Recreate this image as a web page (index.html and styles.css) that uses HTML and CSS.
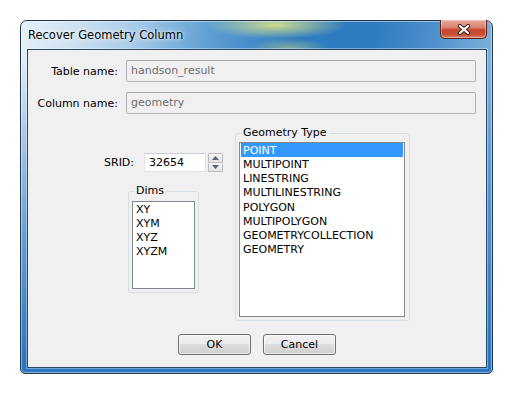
FILE: index.html
```html
<!DOCTYPE html>
<html>
<head>
<meta charset="utf-8">
<link rel="stylesheet" href="styles.css">
</head>
<body>
<div class="window">
  <div class="titlebar">
    <span class="title">Recover Geometry Column</span>
    <div class="close">
      <svg width="14" height="11" viewBox="0 0 14 11">
        <path d="M3 2 L11 9 M11 2 L3 9" stroke="#3b2320" stroke-width="4.2" stroke-linecap="round" fill="none"/>
        <path d="M3 2 L11 9 M11 2 L3 9" stroke="#ffffff" stroke-width="2.2" stroke-linecap="round" fill="none"/>
      </svg>
    </div>
  </div>
  <div class="client">
    <div class="form-grid">
      <span class="lbl">Table name:</span>
      <div class="field">handson_result</div>
      <span class="lbl">Column name:</span>
      <div class="field">geometry</div>
    </div>
    <div class="middle">
      <div class="left-col">
        <div class="srid-row">
          <span class="srid-label">SRID:</span>
          <div class="spin-input">32654</div>
          <div class="spin-btns">
            <div class="spin-btn"><svg width="7" height="4" viewBox="0 0 7 4"><path d="M0 4 L3.5 0 L7 4 Z" fill="#56627a"/></svg></div>
            <div class="spin-btn"><svg width="7" height="4" viewBox="0 0 7 4"><path d="M0 0 L3.5 4 L7 0 Z" fill="#56627a"/></svg></div>
          </div>
        </div>
        <fieldset class="group dims">
          <legend>Dims</legend>
          <div class="listbox dims-list">
            <div class="item">XY</div>
            <div class="item">XYM</div>
            <div class="item">XYZ</div>
            <div class="item">XYZM</div>
          </div>
        </fieldset>
      </div>
      <fieldset class="group geom">
        <legend>Geometry Type</legend>
        <div class="listbox geom-list">
          <div class="item sel">POINT</div>
          <div class="item">MULTIPOINT</div>
          <div class="item">LINESTRING</div>
          <div class="item">MULTILINESTRING</div>
          <div class="item">POLYGON</div>
          <div class="item">MULTIPOLYGON</div>
          <div class="item">GEOMETRYCOLLECTION</div>
          <div class="item">GEOMETRY</div>
        </div>
      </fieldset>
    </div>
    <div class="buttons">
      <button class="btn">OK</button>
      <button class="btn">Cancel</button>
    </div>
  </div>
</div>
</body>
</html>
```

FILE: styles.css
```css
html, body {
  margin: 0;
  background: #ffffff;
}
body {
  padding: 20px;
  font-family: "DejaVu Sans", sans-serif;
  font-size: 11px;
  color: #000;
}
.window {
  width: 473px;
  height: 354px;
  box-sizing: border-box;
  border: 1px solid #223549;
  border-radius: 7px 7px 5px 5px;
  padding: 0 5px 5px 6px;
  display: flex;
  flex-direction: column;
  box-shadow: inset 0 0 0 1px rgba(255,255,255,0.45);
  background:
    linear-gradient(to bottom, rgba(46,124,196,0) 10%, rgba(46,124,196,0.6) 55%, rgba(40,118,192,1) 97%),
    radial-gradient(ellipse 70px 14px at 255px 4px, rgba(214,226,140,0.95), rgba(214,226,140,0) 100%),
    radial-gradient(ellipse 40px 10px at 268px 27px, rgba(190,210,130,0.55), rgba(190,210,130,0) 100%),
    linear-gradient(100deg, #e6f0f9 0, #d0e3f3 50px, #a9cde9 110px, #5c9ed3 190px, #2f7cc0 270px, #2e7bbf 350px, #4f90cb 410px, #7fb1dc 470px);
}
.titlebar {
  height: 28px;
  display: flex;
  align-items: flex-start;
}
.title {
  padding-left: 1px;
  margin-top: 7px;
  line-height: 14px;
  font-size: 11.5px;
  color: #000;
  text-shadow: 0 0 6px rgba(255,255,255,0.95), 0 0 3px rgba(255,255,255,0.8);
}
.close {
  margin-left: auto;
  margin-top: -1px;
  width: 47px;
  height: 19px;
  box-sizing: border-box;
  border: 1px solid #5b241c;
  border-top: none;
  border-radius: 0 0 5px 5px;
  display: flex;
  align-items: center;
  justify-content: center;
  background: linear-gradient(to bottom, #e9aa9b 0, #d98672 40%, #c5462f 55%, #c84d33 80%, #dc8467 100%);
  box-shadow: inset 0 0 0 1px rgba(255,220,210,0.45);
}
.client {
  width: 460px;
  height: 319px;
  box-sizing: border-box;
  border: 1px solid #2c4866;
  background: #f0f0f0;
  display: flex;
  flex-direction: column;
  box-shadow: 0 0 0 1px rgba(255,255,255,0.35);
}
.form-grid {
  display: grid;
  grid-template-columns: 90px 350px;
  column-gap: 8px;
  row-gap: 10px;
  padding-top: 10px;
  align-items: center;
}
.lbl {
  text-align: right;
  white-space: nowrap;
}
.field {
  height: 22px;
  box-sizing: border-box;
  border: 1px solid #b4b4b4;
  border-top-color: #a8a8a8;
  border-radius: 2px;
  background: #f0f0f0;
  color: #6d6d6d;
  padding-left: 4px;
  line-height: 20px;
}
.middle {
  display: flex;
  align-items: flex-start;
  margin-top: 12px;
  padding-left: 76px;
}
.left-col {
  width: 131px;
  display: flex;
  flex-direction: column;
  align-items: flex-start;
}
.srid-row {
  margin-top: 27px;
  display: flex;
  align-items: center;
  height: 19px;
}
.srid-label {
  width: 40px;
}
.spin-input {
  width: 62px;
  height: 19px;
  box-sizing: border-box;
  border: 1px solid #dde3ea;
  border-top-color: #c9ced6;
  background: #fff;
  padding-left: 4px;
  line-height: 17px;
}
.spin-btns {
  margin-left: 2px;
  width: 15px;
  height: 19px;
  display: flex;
  flex-direction: column;
}
.spin-btn {
  flex: 1;
  box-sizing: border-box;
  border: 1px solid #b9bcc2;
  border-radius: 1px;
  background: linear-gradient(#f6f6f6, #e2e2e2);
  display: flex;
  align-items: center;
  justify-content: center;
}
.spin-btn + .spin-btn {
  border-top: none;
}
.group {
  margin: 0;
  min-width: 0;
  border: 1px solid #d5dfe5;
  border-radius: 3px;
  box-sizing: border-box;
  padding: 0 3px 3px 3px;
}
.group legend {
  padding: 0 2px;
  margin-left: 2px;
  line-height: 14px;
  color: #000;
}
.dims {
  margin-top: 12px;
  margin-left: 24px;
  width: 71px;
  padding-top: 3px;
}
.geom {
  width: 175px;
  padding-top: 2px;
  padding-right: 4px;
}
.listbox {
  box-sizing: border-box;
  border: 1px solid #828790;
  background: #fff;
  padding: 0 1px;
  overflow: hidden;
}
.dims-list {
  width: 63px;
  height: 88px;
}
.geom-list {
  width: 166px;
  height: 175px;
}
.item {
  height: 14.15px;
  line-height: 16px;
  padding-left: 2px;
  white-space: nowrap;
}
.item.sel {
  background: #3399ff;
  color: #fff;
}
.buttons {
  display: flex;
  justify-content: center;
  gap: 12px;
  margin-top: 13px;
}
.btn {
  width: 73px;
  height: 21px;
  box-sizing: border-box;
  border: 1px solid #707070;
  border-radius: 3px;
  background: linear-gradient(#f2f2f2 0, #ebebeb 50%, #dddddd 50%, #cfcfcf 100%);
  box-shadow: inset 0 0 0 1px rgba(255,255,255,0.6);
  font-family: inherit;
  font-size: 11px;
  color: #000;
  padding: 0;
  margin: 0;
}
```
